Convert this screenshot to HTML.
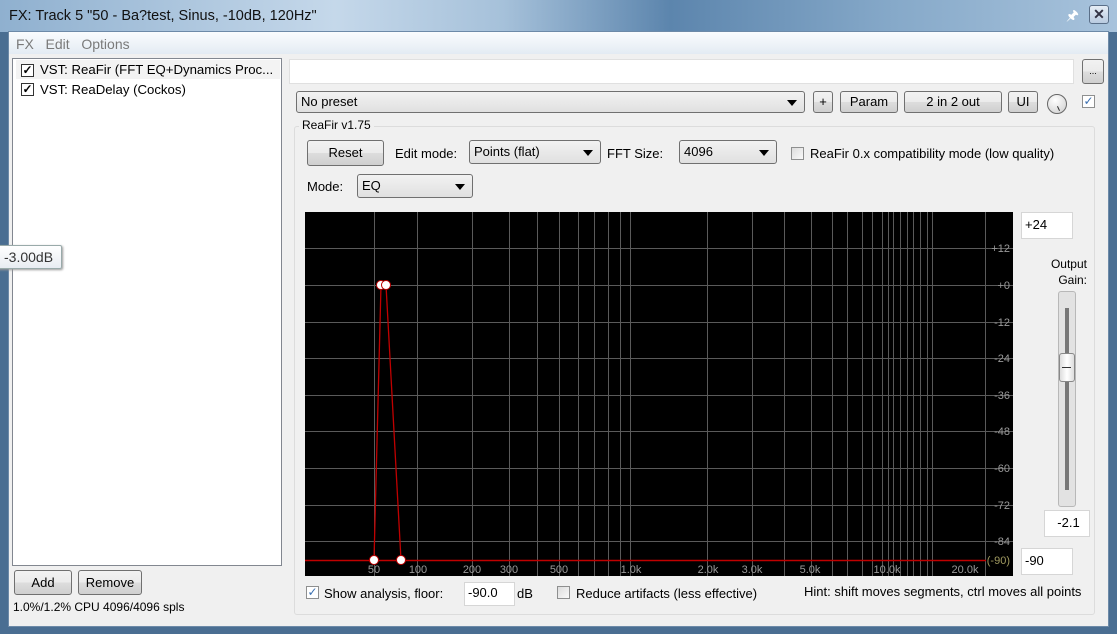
<!DOCTYPE html>
<html><head><meta charset="utf-8"><style>
*{margin:0;padding:0;box-sizing:border-box}
body{width:1117px;height:634px;overflow:hidden;position:relative;font-family:"Liberation Sans",sans-serif;font-size:13px;color:#000;background:#4a6e92}
.a{position:absolute}
.btn{position:absolute;border:1px solid #707070;border-radius:3px;background:linear-gradient(#f2f2f2 0%,#ebebeb 50%,#dddddd 51%,#cfcfcf 100%);text-align:center;font-size:13px}
.dd{position:absolute;border:1px solid #707070;border-radius:3px;background:linear-gradient(#f2f2f2,#e0e0e0);font-size:13px;padding-left:4px}
.dd:after{content:"";position:absolute;right:7px;top:50%;margin-top:-2px;border-left:5px solid transparent;border-right:5px solid transparent;border-top:6px solid #000}
.inp{position:absolute;background:#fff;border:1px solid #d6d6d6;font-size:13px;padding-left:3px}
.cb{position:absolute;width:13px;height:13px;border:1px solid #8e8f8f;background:linear-gradient(135deg,#dcdcdc,#fafafa)}
</style></head><body>
<div class="a" style="left:0;top:0;width:1117px;height:32px;background:linear-gradient(90deg,#8fb0cf 0%,#c5d8ea 30%,#a6c1da 45%,#5c85ad 60%,#86a9c9 80%,#a8c3dc 100%)"></div>
<div class="a" style="left:9px;top:8px;font-size:14.5px;color:#111">FX: Track 5 "50 - Ba?test, Sinus, -10dB, 120Hz"</div>
<div class="a" style="left:1066px;top:5px;font-size:14px;color:#fff">&#x1F588;</div>
<div class="btn" style="left:1089px;top:5px;width:20px;height:19px;background:linear-gradient(#e6eef6,#b9cbe0);border-color:#5a6f88;font-size:14px;line-height:16px;font-weight:bold;color:#334">✕</div>
<div class="a" style="left:8px;top:31px;width:1101px;height:596px;background:#f0f0f0;border:1px solid #6d8aa8"></div>
<div class="a" style="left:9px;top:32px;width:1099px;height:22px;background:linear-gradient(#fafcfe,#e3ebf3)"></div>
<div class="a" style="left:16px;top:36px;color:#7a7a7a;font-size:14px">FX&nbsp;&nbsp; Edit&nbsp;&nbsp; Options</div>
<div class="a" style="left:12px;top:58px;width:270px;height:508px;background:#fff;border:1px solid #828790"></div>
<div class="a" style="left:16px;top:60px;width:264px;height:19px;background:#f3f3f3"></div>
<div class="cb" style="left:21px;top:64px;background:#fff;border-color:#333;font-size:12px;line-height:10px;text-align:center;font-weight:bold">✓</div>
<div class="a" style="left:40px;top:62px;font-size:13.2px">VST: ReaFir (FFT EQ+Dynamics Proc...</div>
<div class="cb" style="left:21px;top:83px;background:#fff;border-color:#333;font-size:12px;line-height:10px;text-align:center;font-weight:bold">✓</div>
<div class="a" style="left:40px;top:82px;font-size:13.2px">VST: ReaDelay (Cockos)</div>
<div class="a" style="left:-4px;top:245px;width:66px;height:24px;background:linear-gradient(#fff,#e8ecf2);border:1px solid #9aa;border-radius:2px;box-shadow:1px 1px 2px #999;font-size:14px;padding:3px 0 0 7px;color:#333">-3.00dB</div>
<div class="btn" style="left:14px;top:570px;width:58px;height:25px;line-height:23px">Add</div>
<div class="btn" style="left:78px;top:570px;width:64px;height:25px;line-height:23px">Remove</div>
<div class="a" style="left:13px;top:600px;font-size:12px">1.0%/1.2% CPU 4096/4096 spls</div>
<div class="inp" style="left:289px;top:59px;width:785px;height:25px;border-color:#e0e0e0"></div>
<div class="btn" style="left:1082px;top:59px;width:22px;height:25px;font-size:9px;line-height:22px">...</div>
<div class="dd" style="left:296px;top:91px;width:509px;height:22px;line-height:20px">No preset</div>
<div class="btn" style="left:813px;top:91px;width:20px;height:22px;line-height:20px">+</div>
<div class="btn" style="left:840px;top:91px;width:58px;height:22px;line-height:20px">Param</div>
<div class="btn" style="left:904px;top:91px;width:98px;height:22px;line-height:20px">2 in 2 out</div>
<div class="btn" style="left:1008px;top:91px;width:30px;height:22px;line-height:20px">UI</div>
<div class="a" style="left:1047px;top:94px;width:20px;height:20px;border-radius:50%;border:1px solid #666;background:radial-gradient(circle at 40% 30%,#fff,#ccc)"></div>
<div class="a" style="left:1058px;top:106px;width:1px;height:5px;background:#333;transform:rotate(-25deg)"></div>
<div class="cb" style="left:1082px;top:95px;background:#fff;color:#3a6fb0;font-size:12px;line-height:11px;text-align:center">✓</div>
<div class="a" style="left:294px;top:126px;width:801px;height:489px;border:1px solid #dcdcdc;border-radius:3px"></div>
<div class="a" style="left:299px;top:118px;background:#f0f0f0;padding:0 3px;font-size:12px">ReaFir v1.75</div>
<div class="btn" style="left:307px;top:140px;width:77px;height:26px;line-height:24px">Reset</div>
<div class="a" style="left:395px;top:146px">Edit mode:</div>
<div class="dd" style="left:469px;top:140px;width:132px;height:24px;line-height:22px">Points (flat)</div>
<div class="a" style="left:607px;top:146px">FFT Size:</div>
<div class="dd" style="left:679px;top:140px;width:98px;height:24px;line-height:22px">4096</div>
<div class="cb" style="left:791px;top:147px"></div>
<div class="a" style="left:810px;top:146px">ReaFir 0.x compatibility mode (low quality)</div>
<div class="a" style="left:307px;top:179px">Mode:</div>
<div class="dd" style="left:357px;top:174px;width:116px;height:24px;line-height:22px">EQ</div>
<svg class="a" style="left:305px;top:212px" width="708" height="364" viewBox="305 212 708 364">
<rect x="305" y="212" width="708" height="364" fill="#000"/>
<g stroke="#5a5a5a" stroke-width="1">
<path d="M305 248.5H1013M305 285.5H1013M305 322.5H1013M305 358.5H1013M305 395.5H1013M305 431.5H1013M305 468.5H1013M305 505.5H1013M305 541.5H1013"/>
<path d="M374.5 212V576M417.5 212V576M472.5 212V576M509.5 212V576M537.5 212V576M559.5 212V576M578.5 212V576M594.5 212V576M608.5 212V576M620.5 212V576M630.5 212V576M707.5 212V576M752.5 212V576M784.5 212V576M811.5 212V576M832.5 212V576M847.5 212V576M862.5 212V576M872.5 212V576M882.5 212V576M888.5 212V576M893.5 212V576M900.5 212V576M907.5 212V576M913.5 212V576M920.5 212V576M927.5 212V576M932.5 212V576M985.5 212V576"/>
</g>
<path d="M305 560.5H986" stroke="#c00000" stroke-width="1.5"/>
<path d="M374 560L381 285L386 285L401 560" stroke="#c00000" stroke-width="1.3" fill="none"/>
<g fill="#fff" stroke="#c00000" stroke-width="1"><circle cx="374" cy="560" r="4.5"/><circle cx="401" cy="560" r="4.5"/><circle cx="381" cy="285" r="4.5"/><circle cx="386" cy="285" r="4.5"/></g>
<g fill="#9a9a9a" font-family="Liberation Sans" font-size="11" text-anchor="end">
<text x="1010" y="252">+12</text><text x="1010" y="289">+0</text><text x="1010" y="326">-12</text><text x="1010" y="362">-24</text><text x="1010" y="399">-36</text><text x="1010" y="435">-48</text><text x="1010" y="472">-60</text><text x="1010" y="509">-72</text><text x="1010" y="545">-84</text>
<text x="1010" y="564" fill="#a09a60">(-90)</text></g>
<g fill="#9a9a9a" font-family="Liberation Sans" font-size="11" text-anchor="middle">
<text x="374" y="573">50</text><text x="418" y="573">100</text><text x="472" y="573">200</text><text x="509" y="573">300</text><text x="559" y="573">500</text><text x="631" y="573">1.0k</text><text x="708" y="573">2.0k</text><text x="752" y="573">3.0k</text><text x="810" y="573">5.0k</text><text x="887" y="573">10.0k</text><text x="965" y="573">20.0k</text></g>
</svg>
<div class="inp" style="left:1021px;top:212px;width:52px;height:27px;line-height:23px">+24</div>
<div class="a" style="left:1030px;top:256px;width:57px;text-align:right;line-height:16px;font-size:12px">Output<br>Gain:</div>
<div class="a" style="left:1058px;top:291px;width:18px;height:216px;background:#e2e2e2;border:1px solid #b8b8b8;border-radius:3px"></div>
<div class="a" style="left:1065px;top:308px;width:4px;height:182px;background:#777"></div>
<div class="a" style="left:1059px;top:353px;width:16px;height:29px;background:linear-gradient(90deg,#ddd,#fff,#ddd);border:1px solid #888;border-radius:3px"></div>
<div class="a" style="left:1062px;top:367px;width:9px;height:1px;background:#333"></div>
<div class="inp" style="left:1044px;top:510px;width:46px;height:27px;text-align:center;line-height:24px">-2.1</div>
<div class="inp" style="left:1021px;top:548px;width:52px;height:27px;line-height:23px">-90</div>
<div class="cb" style="left:306px;top:586px;background:#fff;color:#3a6fb0;font-size:12px;line-height:11px;text-align:center">✓</div>
<div class="a" style="left:324px;top:586px">Show analysis, floor:</div>
<div class="inp" style="left:464px;top:582px;width:51px;height:24px;line-height:20px">-90.0</div>
<div class="a" style="left:517px;top:586px">dB</div>
<div class="cb" style="left:557px;top:586px"></div>
<div class="a" style="left:576px;top:586px">Reduce artifacts (less effective)</div>
<div class="a" style="left:804px;top:584px;font-size:13px">Hint: shift moves segments, ctrl moves all points</div>
</body></html>
